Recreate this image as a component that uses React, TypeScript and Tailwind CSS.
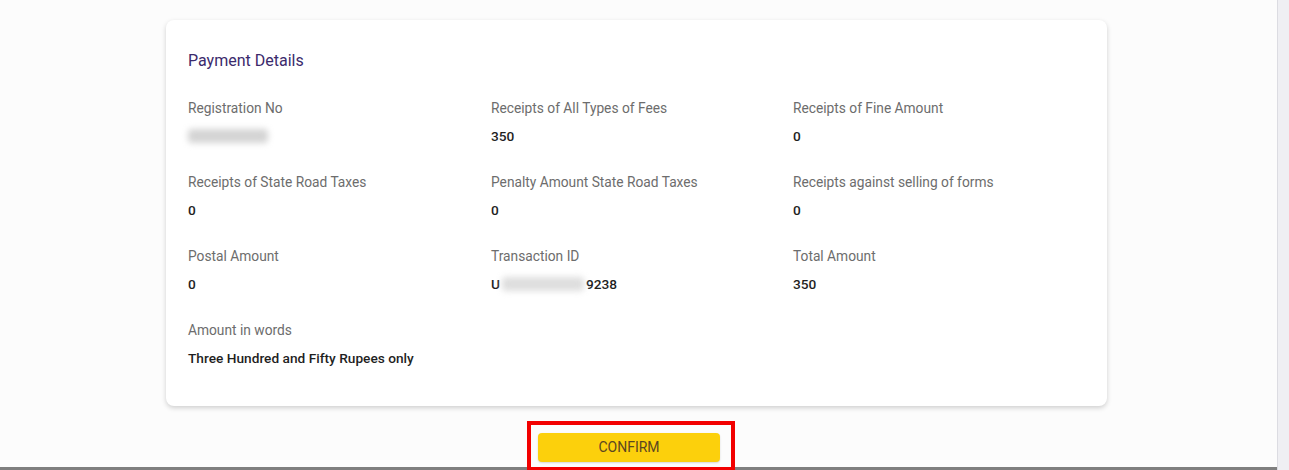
import React from "react";

type Field = {
  label: string;
  value?: string;
  masked?: "reg" | "txn";
};

const fields: Field[] = [
  { label: "Registration No", masked: "reg" },
  { label: "Receipts of All Types of Fees", value: "350" },
  { label: "Receipts of Fine Amount", value: "0" },
  { label: "Receipts of State Road Taxes", value: "0" },
  { label: "Penalty Amount State Road Taxes", value: "0" },
  { label: "Receipts against selling of forms", value: "0" },
  { label: "Postal Amount", value: "0" },
  { label: "Transaction ID", masked: "txn" },
  { label: "Total Amount", value: "350" },
  { label: "Amount in words", value: "Three Hundred and Fifty Rupees only" },
];

function Value({ field }: { field: Field }) {
  if (field.masked === "reg") {
    return (
      <div className="flex h-5 items-center">
        <div className="h-[14px] w-[80px] rounded-sm bg-[#d4d4d4] blur-[3px]" />
      </div>
    );
  }
  if (field.masked === "txn") {
    return (
      <div className="flex h-5 items-center">
        <span>U</span>
        <div className="mx-[2px] h-[14px] w-[82px] rounded-sm bg-[#dedede] blur-[3px]" />
        <span>9238</span>
      </div>
    );
  }
  return <div className="h-5">{field.value}</div>;
}

export default function App() {
  return (
    <div
      className="flex h-[470px] w-full overflow-hidden bg-[#fcfcfc]"
      style={{ fontFamily: "Roboto, 'Liberation Sans', sans-serif" }}
    >
      <div className="flex min-w-0 flex-1 flex-col">
        <div className="pl-[166px] pt-[20px]">
          <div className="w-[941px] rounded-lg bg-white px-[22px] pb-[38px] pt-[31px] shadow-[0_2px_5px_rgba(0,0,0,0.18)]">
            <h2 className="text-[16px] leading-5 text-[#3b2a6c]">Payment Details</h2>
            <div className="mt-[27px] grid grid-cols-[303px_302px_1fr] gap-y-[26px]">
              {fields.map((f) => (
                <div key={f.label}>
                  <div className="text-[13.75px] leading-5 text-[#6d6d6d]">{f.label}</div>
                  <div className="mt-2 text-[13.7px] font-medium leading-5 text-[#1f1f1f]">
                    <Value field={f} />
                  </div>
                </div>
              ))}
            </div>
          </div>
        </div>

        <div className="mt-[27px] pl-[538px]">
          <div className="relative w-[182px]">
            <button
              type="button"
              className="h-[29px] w-[182px] rounded-[4px] bg-[#fcd00c] text-[14px] text-[#5b4621] shadow-[0_1px_2px_rgba(0,0,0,0.15)]"
            >
              CONFIRM
            </button>
            <div className="pointer-events-none absolute -bottom-[9px] -left-[11px] -right-[15px] -top-[12px] border-4 border-[#f20000]" />
          </div>
        </div>

        <div className="mt-[5px] h-[3px] w-full bg-[#7f7f7f]" />
      </div>
      <div className="w-[12px] border-l border-[#dcdce2] bg-[#efeff3]" />
    </div>
  );
}
